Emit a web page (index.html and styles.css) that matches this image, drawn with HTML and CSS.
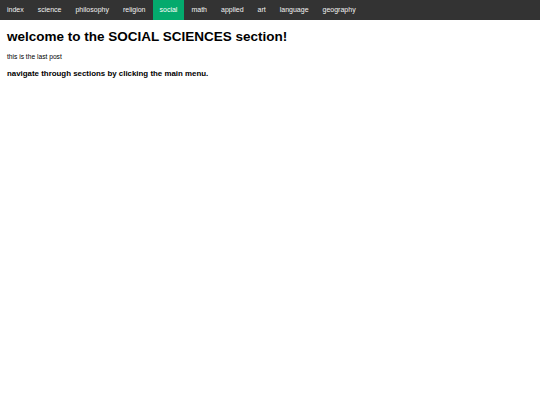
FILE: index.html
```html
<!DOCTYPE html>
<html>
<head>
<meta charset="utf-8">
<link rel="stylesheet" href="styles.css">
</head>
<body>
<nav class="topnav">
  <a href="#">index</a>
  <a href="#">science</a>
  <a href="#">philosophy</a>
  <a href="#">religion</a>
  <a href="#" class="active">social</a>
  <a href="#">math</a>
  <a href="#">applied</a>
  <a href="#">art</a>
  <a href="#">language</a>
  <a href="#">geography</a>
</nav>
<main class="content">
  <h1 class="title">welcome to the SOCIAL SCIENCES section!</h1>
  <p class="note">this is the last post</p>
  <h3 class="hint">navigate through sections by clicking the main menu.</h3>
</main>
</body>
</html>
```

FILE: styles.css
```css
html, body {
  margin: 0;
  padding: 0;
  background: #fff;
  font-family: "Liberation Sans", Arial, sans-serif;
}
.topnav {
  display: flex;
  background: #333;
  overflow: hidden;
}
.topnav a {
  display: block;
  color: #f2f2f2;
  text-decoration: none;
  font-size: 7px;
  line-height: 8px;
  padding: 6px 7px;
}
.topnav a.active {
  background: #04AA6D;
  color: #fff;
}
.content {
  padding: 0 7px;
}
.title {
  font-size: 13.5px;
  margin: 9px 0 0;
  color: #000;
}
.note {
  font-size: 6.67px;
  margin: 9.4px 0 0;
}
.hint {
  font-size: 7.9px;
  margin: 8.5px 0 0;
}
```
